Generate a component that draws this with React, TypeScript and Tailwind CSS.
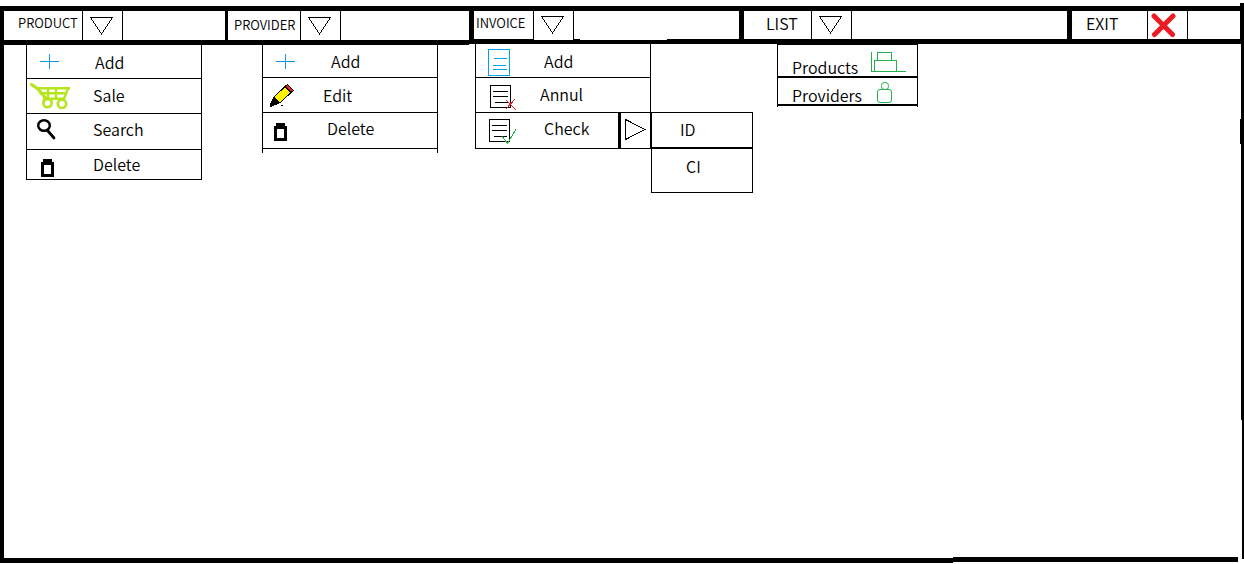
import type { ReactNode } from "react";

function TriangleDown() {
  return (
    <svg width="23" height="18" viewBox="0 0 23 18" fill="none" stroke="#000" shapeRendering="crispEdges" aria-hidden="true">
      <path d="M0.5 0.5H22.5L11.5 17Z" />
    </svg>
  );
}

function TriangleRight() {
  return (
    <svg width="21" height="21" viewBox="0 0 21 21" fill="none" stroke="#000" shapeRendering="crispEdges" aria-hidden="true">
      <path d="M0.5 0.5V20.5L20 10.5Z" />
    </svg>
  );
}

function CloseIcon() {
  return (
    <svg width="25" height="25" viewBox="0 0 25 25" fill="none" stroke="#ed1c24" strokeWidth="5" strokeLinecap="round" aria-hidden="true">
      <path d="M3 3L21.5 21.5M22 3L3.5 21.5" />
    </svg>
  );
}

function PlusIcon() {
  return (
    <svg width="19" height="15" viewBox="0 0 19 15" shapeRendering="crispEdges" fill="#1296db" aria-hidden="true">
      <path d="M0 7h19v1H0zM9 0h1v15H9z" />
    </svg>
  );
}

function CartIcon() {
  return (
    <svg width="40" height="26" viewBox="0 0 40 26" fill="none" stroke="#b5e61d" aria-hidden="true">
      <path d="M1.5 1.5L8 6L15.5 15" strokeWidth="3.2" strokeLinecap="round" />
      <path d="M6 5.2H40M9.5 10.3H37M13 15.8H35" strokeWidth="2.4" />
      <path d="M38.5 4.5L33 18M18 5v11M26 5v11" strokeWidth="2.4" />
      <path d="M14 15L16 18M33 15.5V18" strokeWidth="2.5" />
      <circle cx="17.5" cy="20" r="4.2" strokeWidth="2.7" />
      <circle cx="32" cy="20.8" r="4.2" strokeWidth="2.7" />
    </svg>
  );
}

function SearchIcon() {
  return (
    <svg width="19" height="21" viewBox="0 0 19 21" fill="none" stroke="#000" aria-hidden="true">
      <ellipse cx="7" cy="6.5" rx="5.8" ry="5.3" strokeWidth="2.4" />
      <path d="M10.5 11.5L17 19" strokeWidth="2.8" strokeLinecap="round" />
    </svg>
  );
}

function TrashIcon() {
  return (
    <svg width="13" height="18" viewBox="0 0 13 18" shapeRendering="crispEdges" aria-hidden="true">
      <path fillRule="evenodd" d="M2 0h9v3h2v15H0V3h2zM3 6v9h7V6z" />
    </svg>
  );
}

function PencilIcon() {
  return (
    <svg width="24" height="23" viewBox="0 0 24 23" shapeRendering="crispEdges" aria-hidden="true">
      <path d="M4 13L15.5 2L21.5 8L10 19Z" fill="#fff200" stroke="#000" />
      <path d="M15 2.5L17.5 0.5L23.5 6.5L21 8.5Z" fill="#ed1c24" stroke="#000" />
      <path d="M3.5 13L10 19L2 22.5H0V20.5Z" fill="#000" />
      <path d="M11 21h2v1h-2z" />
    </svg>
  );
}

function InvoiceIcon() {
  return (
    <svg width="22" height="27" viewBox="0 0 22 27" fill="none" stroke="#00a2e8" shapeRendering="crispEdges" aria-hidden="true">
      <path d="M0.5 0.5h21v26h-21zM6 9.5h13M5 16.5h13M5 20.5h14" />
    </svg>
  );
}

function SheetIcon({ children }: { children: ReactNode }) {
  return (
    <svg width="28" height="26" viewBox="0 0 28 26" fill="none" stroke="#000" shapeRendering="crispEdges" aria-hidden="true">
      <path d="M0.5 0.5h20v22h-20zM3 6.5h15M3 11.5h15M5 17.5h13" />
      {children}
    </svg>
  );
}

function BoxesIcon() {
  return (
    <svg width="35" height="20" viewBox="0 0 35 20" fill="none" stroke="#22b14c" shapeRendering="crispEdges" aria-hidden="true">
      <path d="M0.5 0V19.5H35M3.5 19V8.5H25.5V19M6.5 8V0.5H20.5V8" />
    </svg>
  );
}

function PersonIcon() {
  return (
    <svg width="15" height="21" viewBox="0 0 15 21" fill="none" stroke="#22b14c" aria-hidden="true">
      <rect x="4.5" y="0.5" width="7" height="7" rx="3" />
      <rect x="0.5" y="7.5" width="14" height="13" rx="2.5" />
    </svg>
  );
}

function Cell({ children }: { children: ReactNode }) {
  return <span className="flex w-[41px] shrink-0 border-x border-black">{children}</span>;
}

type RowProps = { icon: ReactNode; label: string; slot: string; row: string; text?: string };

function Row({ icon, label, slot, row, text = "" }: RowProps) {
  return (
    <li className={`border-b border-black ${row}`}>
      <button type="button" className="flex h-full w-full items-center text-left">
        <span className={`flex shrink-0 items-center ${slot}`}>{icon}</span>
        <span className={text}>{label}</span>
      </button>
    </li>
  );
}

export default function App() {
  return (
    <div className="flex min-h-screen bg-white pb-px font-['Noto_Sans_CJK_JP','Noto_Sans',sans-serif] text-base leading-5 font-[350] text-black">
      <div className="flex min-w-0 flex-1 flex-col pt-1.5">
        <nav className="grid flex-1 grid-cols-[225fr_244fr_270fr_328fr_173fr] border-t-5 border-black">
          <section className="border-l-4 border-black">
            <button type="button" className="flex h-[34px] w-full border-b-5 border-black text-left text-[13px] leading-6">
              <span className="w-[78px] shrink-0 pl-3.5">PRODUCT</span>
              <Cell><span className="pt-1.5 pl-[7px]"><TriangleDown /></span></Cell>
            </button>
            <ul className="ml-[22px] w-44 border-x border-black">
              <Row row="h-[34px]" slot="w-17 pl-[13px]" icon={<PlusIcon />} label="Add" />
              <Row row="h-[35px]" slot="w-[66px] pl-[3px]" text="pb-0.5" icon={<CartIcon />} label="Sale" />
              <Row row="h-9" slot="w-[66px] pb-1 pl-2.5" text="pb-1.5" icon={<SearchIcon />} label="Search" />
              <Row row="h-[30px]" slot="w-[66px] pt-1.5 pl-3.5" text="pb-0.5" icon={<TrashIcon />} label="Delete" />
            </ul>
          </section>

          <section>
            <button type="button" className="flex h-[34px] w-full border-b-5 border-l-3 border-black text-left text-[13px] leading-7">
              <span className="w-18 shrink-0 pl-1.5">PROVIDER</span>
              <Cell><span className="pt-1.5 pl-[7px]"><TriangleDown /></span></Cell>
            </button>
            <ul className="ml-[37px] w-44 border-x border-black pb-1">
              <Row row="h-[33px]" slot="w-17 pl-[13px]" icon={<PlusIcon />} label="Add" />
              <Row row="h-[35px]" slot="w-15 pl-[7px]" icon={<PencilIcon />} label="Edit" />
              <Row row="h-9" slot="w-16 pt-0.5 pl-[11px]" text="pb-1.5" icon={<TrashIcon />} label="Delete" />
            </ul>
          </section>

          <section>
            <button type="button" className="flex h-[33px] w-full border-b-4 border-l-5 border-black text-left text-[13px] leading-6">
              <span className="w-[59px] shrink-0 border-b border-black pl-0.5">INVOICE</span>
              <Cell><span className="pt-[5px] pl-[7px]"><TriangleDown /></span></Cell>
              <span className="w-1.5 self-end border-b border-black" />
              <span className="flex-1" />
              <span className="w-18 self-end border-b border-black" />
            </button>
            <ul className="ml-1.5 w-44 border-x border-black">
              <Row row="h-[34px]" slot="w-17 pt-1 pl-3" icon={<InvoiceIcon />} label="Add" />
              <Row
                row="h-[35px]"
                slot="w-16 pt-1.5 pl-3.5"
                text="pb-0.5"
                label="Annul"
                icon={<SheetIcon><path d="M16 15L26 25M25 14L16 24" stroke="#ed1c24" /></SheetIcon>}
              />
              <li className="relative flex h-9 border-b border-black">
                <button type="button" className="flex flex-1 items-center text-left">
                  <span className="flex w-17 shrink-0 items-center pt-0.5 pl-[13px]">
                    <SheetIcon><path d="M13 17L18.5 24.5L27 10" stroke="#22b14c" /></SheetIcon>
                  </span>
                  <span className="pb-1.5">Check</span>
                </button>
                <button type="button" aria-label="Check by" className="flex w-8 items-center border-l-3 border-black pb-0.5 pl-1">
                  <TriangleRight />
                </button>
                <ul className="absolute -top-px left-[175px] w-[102px] border border-black">
                  <li className="h-9 border-b-2 border-black">
                    <button type="button" className="h-full w-full pb-0.5 pl-7 text-left">ID</button>
                  </li>
                  <li className="h-[43px]">
                    <button type="button" className="h-full w-full pb-2.5 pl-[34px] text-left">CI</button>
                  </li>
                </ul>
              </li>
            </ul>
          </section>

          <section>
            <button type="button" className="flex h-[33px] w-full border-b-5 border-l-5 border-black text-left leading-6">
              <span className="w-[67px] shrink-0 pl-[22px]">LIST</span>
              <Cell><span className="pt-[5px] pl-[7px]"><TriangleDown /></span></Cell>
            </button>
            <ul className="ml-[38px] w-[141px] border-x border-t border-black pb-px">
              <li className="h-[33px] border-b-2 border-black">
                <button type="button" className="flex h-full w-full items-end pl-3.5 text-left leading-[18px]">
                  <span className="w-[79px]">Products</span>
                  <span className="pb-1"><BoxesIcon /></span>
                </button>
              </li>
              <li className="h-7 border-b-2 border-black">
                <button type="button" className="flex h-full w-full items-end pl-3.5 text-left leading-[18px]">
                  <span className="w-[85px]">Providers</span>
                  <span className="pb-px"><PersonIcon /></span>
                </button>
              </li>
            </ul>
          </section>

          <section>
            <button type="button" className="flex h-[33px] w-full border-b-5 border-l-5 border-black text-left leading-6">
              <span className="w-[75px] shrink-0 pl-3.5">EXIT</span>
              <Cell><span className="pt-0.5 pl-[3px]"><CloseIcon /></span></Cell>
            </button>
          </section>
        </nav>
        <div className="flex border-l-4 border-black">
          <div className="mt-px h-[5px] flex-[949] bg-black" />
          <div className="mr-0.5 h-[5px] flex-[285] bg-black" />
        </div>
      </div>
      <div className="flex w-1 shrink-0 flex-col items-end pt-[3px] pb-1">
        <div className="h-[41px] w-1 bg-black" />
        <div className="h-[75px] w-[3px] bg-black" />
        <div className="h-[25px] w-1 bg-black" />
        <div className="h-[276px] w-[3px] bg-black" />
        <div className="w-0.5 flex-1 bg-black" />
      </div>
    </div>
  );
}
